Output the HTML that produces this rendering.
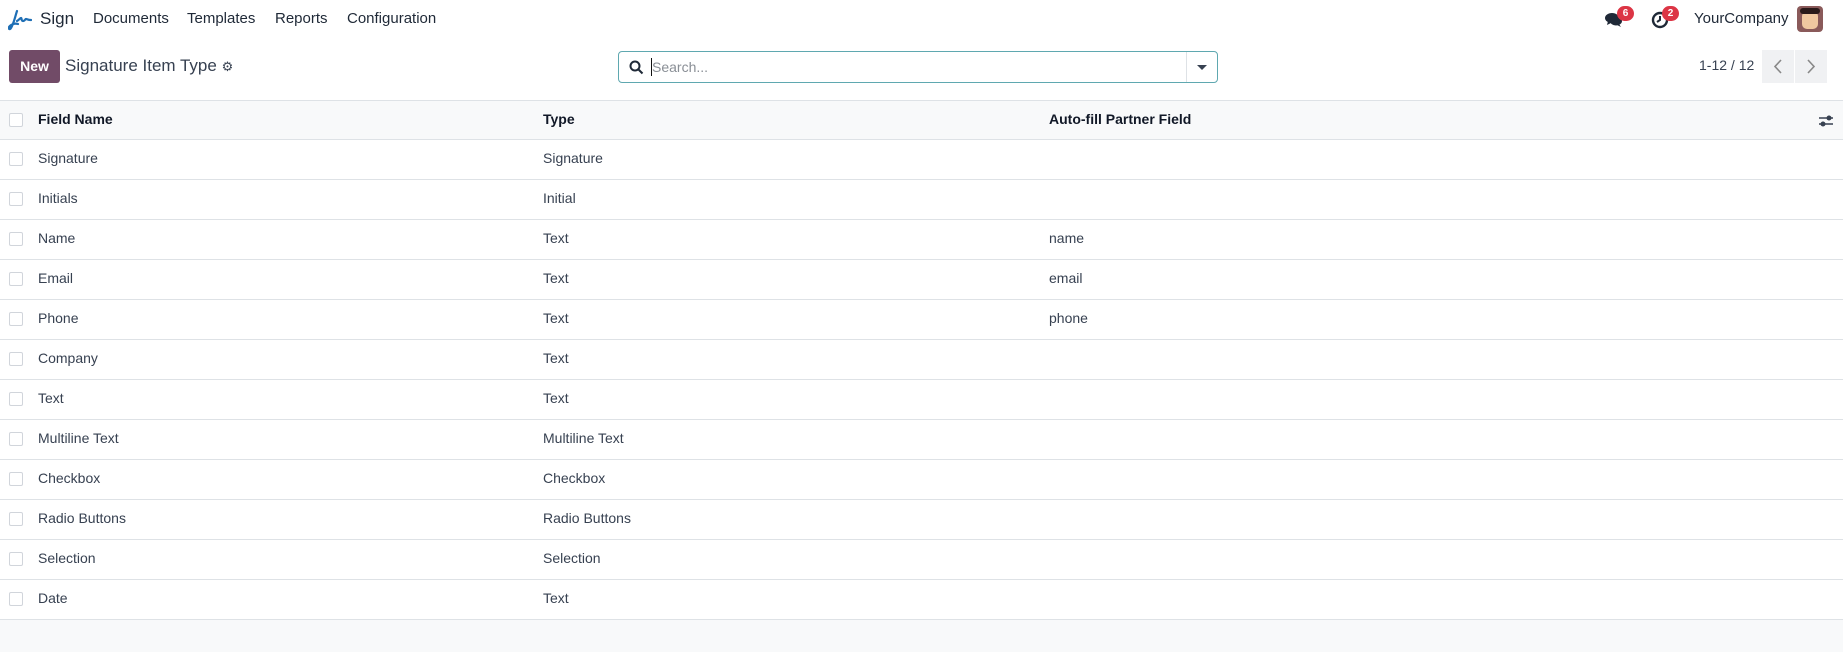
<!DOCTYPE html>
<html><head><meta charset="utf-8"><style>
*{box-sizing:border-box;margin:0;padding:0}
body{width:1843px;height:652px;background:#f8f9fa;font-family:"Liberation Sans","DejaVu Sans",sans-serif;color:#374151;overflow:hidden;position:relative}
.nav{position:absolute;top:0;left:0;width:1843px;height:40px;background:#fff}
.nav span{position:absolute;top:10px;font-size:15px;color:#1f2937}
.cp{position:absolute;top:40px;left:0;width:1843px;height:60px;background:#fff}
.btnnew{position:absolute;left:9px;top:50px;width:51px;height:33px;background:#714b67;color:#fff;border-radius:3px;font-size:14px;font-weight:bold;text-align:center;line-height:33px}
.title{position:absolute;left:65px;top:56px;font-size:17px;color:#374151}
.search{position:absolute;left:618px;top:51px;width:600px;height:32px;border:1px solid #5fa8b0;border-radius:4px;background:#fff}
.table{position:absolute;left:0;top:100px;width:1843px}
.row{position:relative;height:40px;border-bottom:1px solid #dee2e6;background:#fff;font-size:14px}
.row.h{background:#f8f9fa;border-top:1px solid #dee2e6;font-weight:bold;color:#111827}
.row div{position:absolute;top:10px}
.cb{left:9px;top:12px!important;width:14px;height:14px;border:1px solid #d1d5db;border-radius:2px;background:#fff}
.c1{left:38px}.c2{left:543px}.c3{left:1049px}
.badge{position:absolute;background:#dc3545;color:#fff;font-size:10px;font-weight:bold;border-radius:8px;width:17px;height:15px;text-align:center;line-height:15px}
.pg{position:absolute;top:50px;height:33px;width:32px;background:#f0f1f3}
</style></head><body>
<div class="nav">
<svg style="position:absolute;left:8px;top:9px" width="24" height="22" viewBox="0 0 24 22"><path d="M9 2c-2 6-3 12-6 17-1 2-3 1-2-1 2-3 6-4 9-3M9 12c2-1 3-3 4-3s0 3 2 3 2-2 3-2 2 1 5 1" stroke="#1f6fb5" stroke-width="2.2" fill="none" stroke-linecap="round"/></svg>
<span style="left:40px;font-size:17px;top:9px">Sign</span>
<span style="left:93px">Documents</span>
<span style="left:187px">Templates</span>
<span style="left:275px">Reports</span>
<span style="left:347px">Configuration</span>
<svg style="position:absolute;left:1605px;top:12px" width="18" height="16" viewBox="0 0 18 16"><ellipse cx="7" cy="6" rx="7" ry="5" fill="#1f2937"/><ellipse cx="11" cy="9" rx="6" ry="4.5" fill="#1f2937"/><path d="M3 9l-1 4 4-2M14 12l2 3-4-2" fill="#1f2937"/></svg>
<div class="badge" style="left:1617px;top:6px">6</div>
<svg style="position:absolute;left:1651px;top:11px" width="18" height="18" viewBox="0 0 18 18"><circle cx="9" cy="9" r="7" stroke="#1f2937" stroke-width="2.4" fill="none"/><path d="M9 5v4l-3 2" stroke="#1f2937" stroke-width="2" fill="none"/></svg>
<div class="badge" style="left:1662px;top:6px">2</div>
<span style="left:1694px">YourCompany</span>
<div style="position:absolute;left:1797px;top:6px;width:26px;height:26px;border-radius:4px;background:#8a5a5a;overflow:hidden"><div style="position:absolute;left:5px;top:5px;width:16px;height:18px;background:#f0c8a0;border-radius:5px"></div><div style="position:absolute;left:3px;top:2px;width:20px;height:6px;background:#2a1a1a;border-radius:3px"></div></div>
</div>
<div class="cp"></div>
<div class="btnnew">New</div>
<div class="title">Signature Item Type <span style="font-size:13px">⚙</span></div>
<div class="search">
<svg style="position:absolute;left:10px;top:8px" width="15" height="15" viewBox="0 0 15 15"><circle cx="6" cy="6" r="4.5" stroke="#1f2937" stroke-width="2" fill="none"/><path d="M9.5 9.5l4 4" stroke="#1f2937" stroke-width="2"/></svg>
<div style="position:absolute;left:32px;top:6px;width:1px;height:18px;background:#111"></div>
<span style="position:absolute;left:33px;top:7px;font-size:14px;color:#8a8f96">Search...</span>
<div style="position:absolute;right:30px;top:0;width:1px;height:30px;background:#dee2e6"></div>
<div style="position:absolute;right:10px;top:13px;border-left:5px solid transparent;border-right:5px solid transparent;border-top:5px solid #374151"></div>
</div>
<span style="position:absolute;left:1699px;top:57px;font-size:14px">1-12 / 12</span>
<div class="pg" style="left:1762px"><svg style="position:absolute;left:10px;top:9px" width="12" height="15"><path d="M9 1L3 7.5 9 14" stroke="#888" stroke-width="1.6" fill="none"/></svg></div>
<div class="pg" style="left:1795px"><svg style="position:absolute;left:10px;top:9px" width="12" height="15"><path d="M3 1l6 6.5L3 14" stroke="#888" stroke-width="1.6" fill="none"/></svg></div>
<div class="table">
<div class="row h"><div class="cb"></div><div class="c1">Field Name</div><div class="c2">Type</div><div class="c3">Auto-fill Partner Field</div>
<svg style="position:absolute;left:1818px;top:13px" width="16" height="14"><path d="M1 4h14M1 10h14" stroke="#374151" stroke-width="1.5"/><circle cx="11" cy="4" r="2.5" fill="#374151"/><circle cx="5" cy="10" r="2.5" fill="#374151"/></svg></div>
<div class="row"><div class="cb"></div><div class="c1">Signature</div><div class="c2">Signature</div></div>
<div class="row"><div class="cb"></div><div class="c1">Initials</div><div class="c2">Initial</div></div>
<div class="row"><div class="cb"></div><div class="c1">Name</div><div class="c2">Text</div><div class="c3">name</div></div>
<div class="row"><div class="cb"></div><div class="c1">Email</div><div class="c2">Text</div><div class="c3">email</div></div>
<div class="row"><div class="cb"></div><div class="c1">Phone</div><div class="c2">Text</div><div class="c3">phone</div></div>
<div class="row"><div class="cb"></div><div class="c1">Company</div><div class="c2">Text</div></div>
<div class="row"><div class="cb"></div><div class="c1">Text</div><div class="c2">Text</div></div>
<div class="row"><div class="cb"></div><div class="c1">Multiline Text</div><div class="c2">Multiline Text</div></div>
<div class="row"><div class="cb"></div><div class="c1">Checkbox</div><div class="c2">Checkbox</div></div>
<div class="row"><div class="cb"></div><div class="c1">Radio Buttons</div><div class="c2">Radio Buttons</div></div>
<div class="row"><div class="cb"></div><div class="c1">Selection</div><div class="c2">Selection</div></div>
<div class="row"><div class="cb"></div><div class="c1">Date</div><div class="c2">Text</div></div>
</div>
</body></html>
